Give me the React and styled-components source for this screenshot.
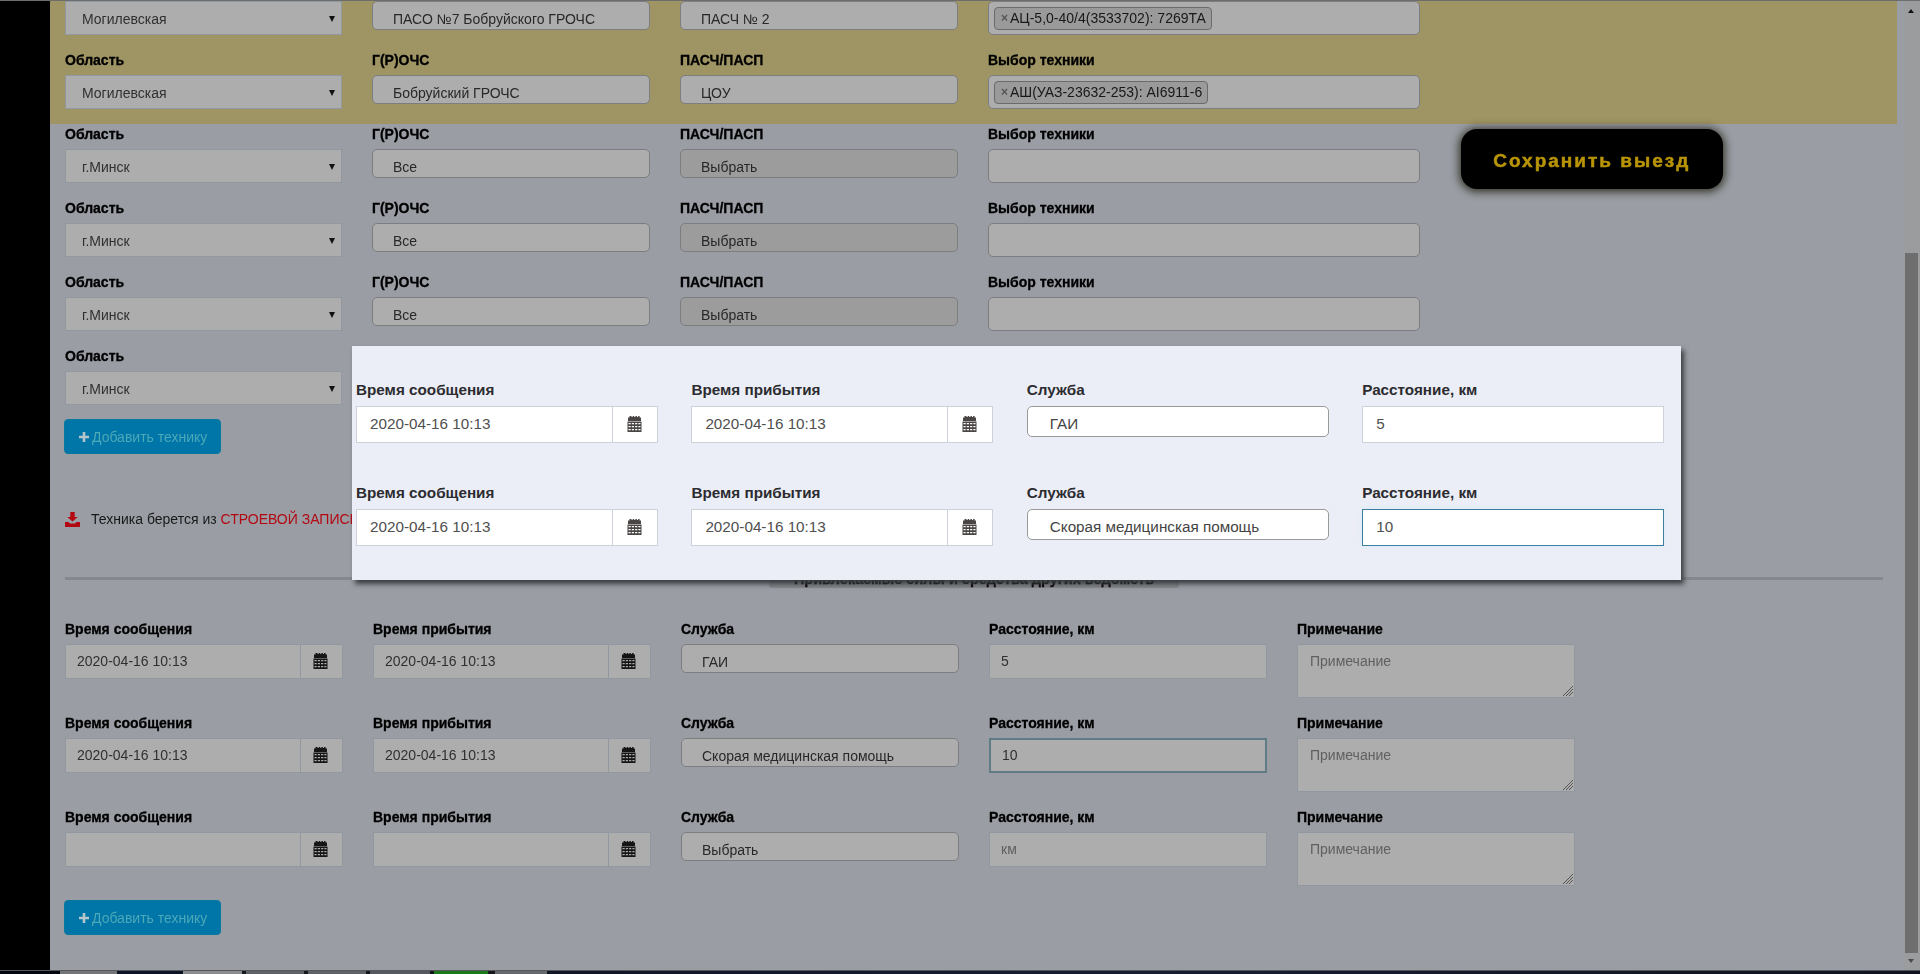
import React from 'react';
import styled, { createGlobalStyle, css } from 'styled-components';

const Global = createGlobalStyle`
  * { box-sizing: border-box; }
  html, body { margin: 0; padding: 0; overflow: hidden; }
  body { font-family: "Liberation Sans", Arial, sans-serif; font-size: 14px; color: #191919; }
`;

const Screen = styled.div`
  position: relative;
  width: 1920px;
  height: 974px;
  overflow: hidden;
  background: #9a9da4;
`;
const Backdrop = styled.div`
  display: flex;
  flex-direction: column;
  width: 1920px;
  height: 974px;
  filter: blur(0.7px);
`;
const Workspace = styled.div`
  display: flex;
  height: 970px;
  border-top: 1px solid #6c6c6c;
`;
const Sidebar = styled.aside`
  width: 50px;
  background: #000;
`;
const Main = styled.main`
  width: 1854px;
  height: 969px;
  overflow: hidden;
  background: #9a9da4;
`;
const Highlight = styled.div`
  width: 1847px;
  background: #9f9463;
`;
const TechRow = styled.div`
  display: grid;
  grid-template-columns: 277px 278px 278px 432px;
  column-gap: 30px;
  height: ${(p) => (p.$first ? 49 : 74)}px;
  padding-left: 15px;
`;
const ServiceRow = styled.div`
  display: grid;
  grid-template-columns: repeat(5, 277.5px);
  column-gap: 30.5px;
  height: 94px;
  padding-left: 15px;
`;
const Field = styled.div`
  display: flex;
  flex-direction: column;
  min-width: 0;
`;
const Label = styled.label`
  height: ${(p) => (p.$large ? 27 : 25)}px;
  line-height: ${(p) => (p.$large ? 22 : 20)}px;
  font-size: ${(p) => (p.$large ? 15.25 : 14)}px;
  font-weight: bold;
  white-space: nowrap;
  color: ${(p) => (p.$large ? '#2b2b30' : '#000')};
  ${(p) => !p.$large && '-webkit-text-stroke: 0.3px #000;'}
`;
const boxed = css`
  display: flex;
  align-items: center;
  width: 100%;
  white-space: nowrap;
`;
const NativeSelect = styled.div`
  ${boxed}
  justify-content: space-between;
  height: 34px;
  padding: 1px 6px 0 16px;
  border: 1px solid #9298a0;
  background: #adadad;
  color: #303030;
`;
const Caret = styled.span`
  width: 0;
  height: 0;
  border: 3.5px solid transparent;
  border-top: 6px solid #111;
  border-bottom: 0;
`;
const Dropdown = styled.div`
  ${boxed}
  height: ${(p) => (p.$large ? 31 : 29)}px;
  padding: ${(p) => (p.$large ? '5px 0 0 22px' : '6px 0 0 20px')};
  border: ${(p) => (p.$large ? '1px solid #9a9a9a' : '1.5px solid #7c7d81')};
  border-radius: 5px;
  background: ${(p) => (p.$large ? '#fff' : p.$disabled ? '#9c9c9c' : '#adadad')};
  color: ${(p) => (p.$large ? '#444' : '#282828')};
  font-size: ${(p) => (p.$large ? 15.25 : 14)}px;
`;
const TagBox = styled.div`
  ${boxed}
  height: 34px;
  padding-left: 5px;
  border: 1.5px solid #7c7d81;
  border-radius: 5px;
  background: #adadad;
`;
const Tag = styled.span`
  display: flex;
  align-items: center;
  gap: 2px;
  height: 23px;
  padding: 0 5px 0 6px;
  border: 1px solid #6b6b6b;
  border-radius: 4px;
  background: #9a9a9a;
  color: #181818;
`;
const Cross = styled.span`
  color: #555;
  font-size: 12px;
  font-weight: bold;
`;
const Input = styled.div`
  ${boxed}
  height: ${(p) => (p.$large ? 37 : 35)}px;
  padding: ${(p) => (p.$large ? '0 0 1px 13px' : '0 0 2px 11px')};
  border: 1px solid ${(p) => (p.$large ? '#ccd1da' : '#9298a0')};
  background: ${(p) => (p.$large ? '#fff' : '#adadad')};
  color: ${(p) => (p.$large ? '#505050' : p.$hint ? '#606060' : '#303030')};
  font-size: ${(p) => (p.$large ? 15.25 : 14)}px;
  ${(p) => p.$focus && (p.$large
    ? 'border-color: #3f7d9e; box-shadow: 0 0 4px #d5ecfa;'
    : 'border: 2px solid #617b86;')}
`;
const Group = styled.div`
  display: flex;
`;
const Addon = styled.div`
  display: flex;
  flex: none;
  align-items: center;
  justify-content: center;
  width: ${(p) => (p.$large ? 45 : 42)}px;
  padding: 0 2px 1px 0;
  border: 1px solid ${(p) => (p.$large ? '#ccd1da' : '#9298a0')};
  border-left: 0;
  background: ${(p) => (p.$large ? '#fff' : '#adadad')};
`;
const Note = styled.div`
  position: relative;
  height: 54px;
  padding: 7px 12px;
  border: 1px solid #9298a0;
  background: #adadad;
  color: #606060;
  line-height: 18px;
`;
const Grip = styled.svg`
  position: absolute;
  right: 1px;
  bottom: 1px;
`;
const AddButton = styled.button`
  display: flex;
  align-items: center;
  gap: 3px;
  width: 157px;
  height: 35px;
  margin: -1px 0 0 14px;
  padding: 0 0 0 14px;
  border: 1px solid #0779a0;
  border-radius: 4px;
  background: #0075a8;
  color: #4ba9b8;
  font: 14px "Liberation Sans", Arial, sans-serif;
  white-space: nowrap;
`;
const Source = styled.p`
  display: flex;
  align-items: center;
  height: 20px;
  margin: 55px 0 0;
  padding-left: 15px;
  white-space: nowrap;
`;
const SourceText = styled.span`
  margin-left: 11px;
`;
const Red = styled.span`
  color: #b30812;
`;
const Divider = styled.div`
  display: flex;
  align-items: center;
  width: 1818px;
  height: 26px;
  margin: 36px 0 28px 15px;
`;
const Line = styled.i`
  flex: 1;
  height: 3px;
  background: #85888e;
`;
const Heading = styled.h4`
  width: 410px;
  height: 20px;
  margin: 0;
  border-radius: 3px;
  background: #85878c;
  color: #000;
  font-size: 14.5px;
  line-height: 23px;
  text-align: center;
  white-space: nowrap;
  -webkit-text-stroke: 0.3px #000;
`;
const Scroll = styled.div`
  display: flex;
  flex-direction: column;
  align-items: center;
  width: 16px;
  padding: 8px 2px 7px 0;
  background: #9b9c9d;
`;
const ScrollArrow = styled.span`
  border: 3.5px solid transparent;
  ${(p) => (p.$down ? 'border-top: 4px solid #4a4a4a; border-bottom: 0;' : 'border-bottom: 4px solid #111; border-top: 0;')}
`;
const Thumb = styled.div`
  width: 13px;
  height: 700px;
  margin: auto 0 6px;
  background: #6e6e6e;
`;
const Taskbar = styled.div`
  display: flex;
  height: 4px;
  border-top: 1px solid #55585b;
  background: linear-gradient(90deg, #0b101c, #161d31 60%, #10131f);
`;
const Task = styled.i`
  width: ${(p) => p.$w}px;
  background: ${(p) => p.$c};
`;
const SaveButton = styled.button`
  position: absolute;
  left: 1460.5px;
  top: 129px;
  width: 262.5px;
  height: 60px;
  padding: 3px 0 0;
  border: 0;
  border-radius: 16px;
  background: #000;
  box-shadow: 0 1px 9px 2px #35362b;
  color: #b89406;
  font: bold 19px "Liberation Sans", Arial, sans-serif;
  letter-spacing: 2px;
  -webkit-text-stroke: 0.5px #b89406;
  white-space: nowrap;
  filter: blur(0.5px);
`;
const Panel = styled.section`
  position: absolute;
  left: 352px;
  top: 345.5px;
  display: flex;
  flex-direction: column;
  gap: 66px;
  width: 1329px;
  height: 234px;
  padding: 33px 0 0 4px;
  background: #ebeef6;
  box-shadow: 3px 4px 5px #3b3d40;
`;
const PanelRow = styled.div`
  display: grid;
  grid-template-columns: repeat(4, 302px);
  column-gap: 33.4px;
  height: 37px;
`;

const CalendarIcon = ({ large }) => (
  <svg width="15" height="16" viewBox="0 0 15 16" fill={large ? '#4a4545' : '#151515'}>
    <path d="M1 1.5h1.5V0h2v1h1.2V0h1.5v1h1.2V0h1.5v1h1.2V0h1.5v1.5H14V5H1z" />
    <path fillRule="evenodd" d="M0.5 5.5h14V16h-14zM1.5 7v1.2h2.2V7zm3.3 0v1.2H7V7zm3.3 0v1.2h2.2V7zm3.3 0v1.2h2.1V7zM1.5 10v1.2h2.2V10zm3.3 0v1.2H7V10zm3.3 0v1.2h2.2V10zm3.3 0v1.2h2.1V10zM1.5 13v1.2h2.2V13zm3.3 0v1.2H7V13zm3.3 0v1.2h2.2V13zm3.3 0v1.2h2.1V13z" />
  </svg>
);

const DateField = ({ label, value, large }) => (
  <Field>
    <Label $large={large}>{label}</Label>
    <Group>
      <Input $large={large}>{value}</Input>
      <Addon $large={large}><CalendarIcon large={large} /></Addon>
    </Group>
  </Field>
);

const DropdownField = ({ label, value, large, disabled }) => (
  <Field>
    <Label $large={large}>{label}</Label>
    <Dropdown $large={large} $disabled={disabled}>{value}</Dropdown>
  </Field>
);

const DistanceField = ({ value, large, focus, hint }) => (
  <Field>
    <Label $large={large}>Расстояние, км</Label>
    <Input $large={large} $focus={focus} $hint={hint}>{value}</Input>
  </Field>
);

const RegionField = ({ region, bare }) => (
  <Field>
    {!bare && <Label>Область</Label>}
    <NativeSelect>{region}<Caret /></NativeSelect>
  </Field>
);

const TechFields = ({ first, region, dept, unit, tag }) => (
  <TechRow $first={first}>
    <RegionField region={region} bare={first} />
    <Field>
      {!first && <Label>Г(Р)ОЧС</Label>}
      <Dropdown>{dept}</Dropdown>
    </Field>
    <Field>
      {!first && <Label>ПАСЧ/ПАСП</Label>}
      <Dropdown $disabled={!tag}>{unit}</Dropdown>
    </Field>
    <Field>
      {!first && <Label>Выбор техники</Label>}
      <TagBox>{tag && <Tag><Cross>×</Cross>{tag}</Tag>}</TagBox>
    </Field>
  </TechRow>
);

const AddTech = () => (
  <AddButton>
    <svg width="10" height="10" viewBox="0 0 10 10" fill="#b5c5ca"><path d="M3.7 0h2.6v3.7H10v2.6H6.3V10H3.7V6.3H0V3.7h3.7z" /></svg>
    Добавить технику
  </AddButton>
);

const DATE = '2020-04-16 10:13';
const services = [
  { date: DATE, service: 'ГАИ', distance: '5' },
  { date: DATE, service: 'Скорая медицинская помощь', distance: '10', focus: true },
  { date: '', service: 'Выбрать', distance: 'км', hint: true },
];
const tasks = [
  [60, '#04070d'], [57, '#737577'], [66, '#0c1426'], [59, '#8b8c8d'], [4, '#15171c'],
  [58, '#5f6267'], [4, '#15171c'], [58, '#5f6267'], [4, '#15171c'], [60, '#55585f'],
  [4, '#15171c'], [54, '#1c7a1c'], [7, '#15171c'], [52, '#66696d'],
];

export default function App() {
  return (
    <Screen>
      <Global />
      <Backdrop>
        <Workspace>
          <Sidebar />
          <Main>
            <Highlight>
              <TechFields first region="Могилевская" dept="ПАСО №7 Бобруйского ГРОЧС" unit="ПАСЧ № 2" tag="АЦ-5,0-40/4(3533702): 7269ТА" />
              <TechFields region="Могилевская" dept="Бобруйский ГРОЧС" unit="ЦОУ" tag="АШ(УАЗ-23632-253): AI6911-6" />
            </Highlight>
            {[0, 1, 2].map((i) => (
              <TechFields key={i} region="г.Минск" dept="Все" unit="Выбрать" />
            ))}
            <TechRow>
              <RegionField region="г.Минск" />
            </TechRow>
            <AddTech />
            <Source>
              <svg width="15" height="15" viewBox="0 0 15 15" fill="#b30812"><path d="M5.3 0h4.400v5h3L7.500 9.600 2.300 5h3zM0 10h3.500l1.500 1.600h5L11.500 10H15v5H0z" /></svg>
              <SourceText>Техника берется из <Red>СТРОЕВОЙ ЗАПИСКИ</Red></SourceText>
            </Source>
            <Divider>
              <Line />
              <Heading>Привлекаемые силы и средства других ведомств</Heading>
              <Line />
            </Divider>
            {services.map((s, i) => (
              <ServiceRow key={i}>
                <DateField label="Время сообщения" value={s.date} />
                <DateField label="Время прибытия" value={s.date} />
                <DropdownField label="Служба" value={s.service} />
                <DistanceField value={s.distance} focus={s.focus} hint={s.hint} />
                <Field>
                  <Label>Примечание</Label>
                  <Note>
                    Примечание
                    <Grip width="10" height="10" viewBox="0 0 10 10" stroke="#555" fill="none"><path d="M0 10L10 0M3 10l7-7M6 10l4-4" /></Grip>
                  </Note>
                </Field>
              </ServiceRow>
            ))}
            <AddTech />
          </Main>
          <Scroll>
            <ScrollArrow />
            <Thumb />
            <ScrollArrow $down />
          </Scroll>
        </Workspace>
        <Taskbar>
          {tasks.map(([w, c], i) => <Task key={i} $w={w} $c={c} />)}
        </Taskbar>
      </Backdrop>
      <SaveButton>Сохранить выезд</SaveButton>
      <Panel>
        {services.slice(0, 2).map((s, i) => (
          <PanelRow key={i}>
            <DateField large label="Время сообщения" value={s.date} />
            <DateField large label="Время прибытия" value={s.date} />
            <DropdownField large label="Служба" value={s.service} />
            <DistanceField large value={s.distance} focus={s.focus} />
          </PanelRow>
        ))}
      </Panel>
    </Screen>
  );
}
